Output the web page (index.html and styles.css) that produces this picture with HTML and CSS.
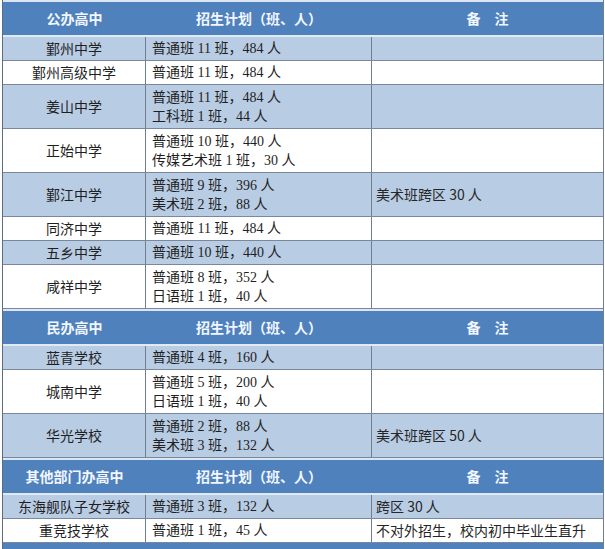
FILE: index.html
```html
<!DOCTYPE html>
<html lang="zh-CN">
<head>
<meta charset="utf-8">
<title>招生计划</title>
<link rel="stylesheet" href="styles.css">
</head>
<body>
<div class="sheet">
  <div class="row head">
    <div class="c1">公办高中</div>
    <div class="c2">招生计划（班、人）</div>
    <div class="c3">备　注</div>
  </div>
  <div class="row single band">
    <div class="c1">鄞州中学</div>
    <div class="c2">普通班 11 班，484 人</div>
    <div class="c3"></div>
  </div>
  <div class="row single">
    <div class="c1">鄞州高级中学</div>
    <div class="c2">普通班 11 班，484 人</div>
    <div class="c3"></div>
  </div>
  <div class="row double band">
    <div class="c1">姜山中学</div>
    <div class="c2"><div>普通班 11 班，484 人</div><div>工科班 1 班，44 人</div></div>
    <div class="c3"></div>
  </div>
  <div class="row double">
    <div class="c1">正始中学</div>
    <div class="c2"><div>普通班 10 班，440 人</div><div>传媒艺术班 1 班，30 人</div></div>
    <div class="c3"></div>
  </div>
  <div class="row double band">
    <div class="c1">鄞江中学</div>
    <div class="c2"><div>普通班 9 班，396 人</div><div>美术班 2 班，88 人</div></div>
    <div class="c3">美术班跨区 30 人</div>
  </div>
  <div class="row single">
    <div class="c1">同济中学</div>
    <div class="c2">普通班 11 班，484 人</div>
    <div class="c3"></div>
  </div>
  <div class="row single band">
    <div class="c1">五乡中学</div>
    <div class="c2">普通班 10 班，440 人</div>
    <div class="c3"></div>
  </div>
  <div class="row double">
    <div class="c1">咸祥中学</div>
    <div class="c2"><div>普通班 8 班，352 人</div><div>日语班 1 班，40 人</div></div>
    <div class="c3"></div>
  </div>

  <div class="row head">
    <div class="c1">民办高中</div>
    <div class="c2">招生计划（班、人）</div>
    <div class="c3">备　注</div>
  </div>
  <div class="row single band">
    <div class="c1">蓝青学校</div>
    <div class="c2">普通班 4 班，160 人</div>
    <div class="c3"></div>
  </div>
  <div class="row double">
    <div class="c1">城南中学</div>
    <div class="c2"><div>普通班 5 班，200 人</div><div>日语班 1 班，40 人</div></div>
    <div class="c3"></div>
  </div>
  <div class="row double band">
    <div class="c1">华光学校</div>
    <div class="c2"><div>普通班 2 班，88 人</div><div>美术班 3 班，132 人</div></div>
    <div class="c3">美术班跨区 50 人</div>
  </div>

  <div class="row head">
    <div class="c1">其他部门办高中</div>
    <div class="c2">招生计划（班、人）</div>
    <div class="c3">备　注</div>
  </div>
  <div class="row single band">
    <div class="c1">东海舰队子女学校</div>
    <div class="c2">普通班 3 班，132 人</div>
    <div class="c3">跨区 30 人</div>
  </div>
  <div class="row single">
    <div class="c1">重竞技学校</div>
    <div class="c2">普通班 1 班，45 人</div>
    <div class="c3">不对外招生，校内初中毕业生直升</div>
  </div>
  <div class="bar"></div>
</div>
</body>
</html>
```

FILE: styles.css
```css
html, body {
  margin: 0;
  padding: 0;
  background: #ffffff;
}

.sheet {
  margin-left: 2px;
  width: 602px;
  box-sizing: border-box;
  border-left: 1px solid #5d6d80;
  border-right: 1px solid #6f7f92;
  font-family: "Liberation Serif", "Noto Sans CJK SC", serif;
  font-size: 14px;
  color: #1f1f1f;
}

.row {
  display: flex;
  box-sizing: border-box;
  border-bottom: 1px solid #7b8899;
  background: #ffffff;
}

.single {
  height: 24px;
}

.double {
  height: 44px;
}

.band {
  background: #b8cce4;
}

.c1, .c2, .c3 {
  display: flex;
  flex-direction: column;
  justify-content: center;
  box-sizing: border-box;
  line-height: 19px;
  white-space: nowrap;
}

.c1 {
  width: 143px;
  border-right: 1px solid #6f7f92;
  align-items: center;
  font-family: "Noto Sans CJK SC", sans-serif;
}

.c2 {
  width: 226px;
  border-right: 1px solid #6f7f92;
  padding-left: 6px;
}

.c3 {
  flex: 1;
  padding-left: 4px;
  font-family: "Noto Sans CJK SC", sans-serif;
  color: #262626;
}

.head {
  height: 37px;
  background: #4f81bd;
  border-top: 2px solid #dbe6f2;
  border-bottom: 2px solid #dfeaf5;
  color: #f2f7ff;
  font-family: "Noto Sans CJK SC", sans-serif;
  font-weight: 700;
}

.head .c1,
.head .c2,
.head .c3 {
  border-right: none;
  align-items: center;
  padding: 0;
  color: #f2f7ff;
}

.bar {
  height: 6px;
  background: #4f81bd;
}
```
